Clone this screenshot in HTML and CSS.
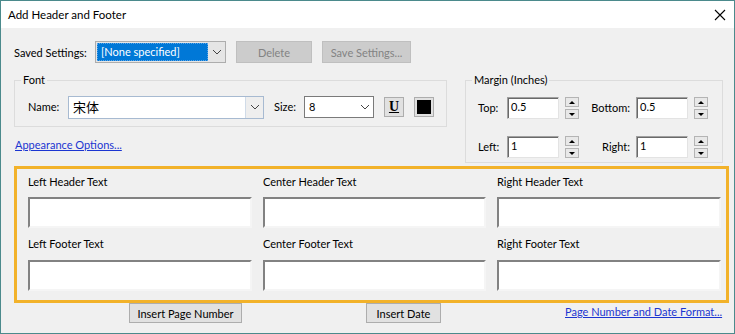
FILE: index.html
```html
<!DOCTYPE html>
<html lang="en">
<head>
  <meta charset="UTF-8" />
  <meta name="viewport" content="width=device-width, initial-scale=1.0"/>
  <title>Add Header and Footer</title>
  <link rel="stylesheet" href="styles.css">
</head>
<body>
  <div class="window">
    <div class="titlebar">
      <span class="title">Add Header and Footer</span>
      <svg class="close" width="12" height="12" viewBox="0 0 12 12">
        <path d="M1 1 L11 11 M11 1 L1 11" stroke="#000" stroke-width="1.1" fill="none"/>
      </svg>
    </div>

    <div class="content">
      <div class="saved-row">
        <span class="saved-label">Saved Settings:</span>
        <div class="list-combo">
          <span class="selected">[None specified]</span>
          <svg class="chev" width="10" height="6" viewBox="0 0 10 6"><path d="M1 1 L5 5 L9 1" stroke="#444" fill="none"/></svg>
        </div>
        <button class="btn disabled delete-btn">Delete</button>
        <button class="btn disabled save-btn">Save Settings...</button>
      </div>

      <div class="groups">
        <div class="left-col">
          <fieldset class="group font-group">
            <legend>Font</legend>
            <div class="font-row">
              <span class="lbl name-lbl">Name:</span>
              <div class="combo name-combo">
                <span class="combo-text cjk">宋体</span>
                <span class="combo-btn">
                  <svg width="10" height="6" viewBox="0 0 10 6"><path d="M1 1 L5 5 L9 1" stroke="#444" fill="none"/></svg>
                </span>
              </div>
              <span class="lbl size-lbl">Size:</span>
              <div class="combo size-combo">
                <span class="combo-text">8</span>
                <span class="combo-btn plain">
                  <svg width="10" height="6" viewBox="0 0 10 6"><path d="M1 1 L5 5 L9 1" stroke="#444" fill="none"/></svg>
                </span>
              </div>
              <button class="tool-btn underline-btn">U</button>
              <button class="tool-btn color-btn"><span class="swatch"></span></button>
            </div>
          </fieldset>
          <a class="link appearance" href="#">Appearance Options...</a>
        </div>

        <fieldset class="group margin-group">
          <legend>Margin (Inches)</legend>
          <div class="margin-grid">
            <span class="lbl">Top:</span>
            <div class="num-input">0.5</div>
            <div class="spinner"><span class="up"></span><span class="down"></span></div>
            <span class="lbl right">Bottom:</span>
            <div class="num-input">0.5</div>
            <div class="spinner"><span class="up"></span><span class="down"></span></div>

            <span class="lbl">Left:</span>
            <div class="num-input">1</div>
            <div class="spinner"><span class="up"></span><span class="down"></span></div>
            <span class="lbl right">Right:</span>
            <div class="num-input">1</div>
            <div class="spinner"><span class="up"></span><span class="down"></span></div>
          </div>
        </fieldset>
      </div>

      <div class="text-box">
        <span class="field-lbl">Left Header Text</span>
        <span class="field-lbl">Center Header Text</span>
        <span class="field-lbl">Right Header Text</span>
        <div class="text-field"></div>
        <div class="text-field"></div>
        <div class="text-field"></div>
        <span class="field-lbl footer">Left Footer Text</span>
        <span class="field-lbl footer">Center Footer Text</span>
        <span class="field-lbl footer">Right Footer Text</span>
        <div class="text-field"></div>
        <div class="text-field"></div>
        <div class="text-field"></div>
      </div>

      <div class="bottom-row">
        <button class="btn page-num-btn">Insert Page Number</button>
        <button class="btn date-btn">Insert Date</button>
        <a class="link format-link" href="#">Page Number and Date Format...</a>
      </div>
    </div>
  </div>
</body>
</html>
```

FILE: styles.css
```css
body {
  margin: 0;
  font-family: Lato, "Noto Sans CJK SC", sans-serif;
  font-size: 11px;
  color: #000;
  background: #f0f0f0;
  white-space: nowrap;
}

.window {
  width: 735px;
  height: 334px;
  box-sizing: border-box;
  border: 1px solid #4b8a8c;
  background: #f0f0f0;
  overflow: hidden;
}

.titlebar {
  height: 27px;
  background: #fff;
  display: flex;
  align-items: center;
  justify-content: space-between;
  padding: 0 8px 0 7px;
}

.title {
  font-size: 11.5px;
  color: #000;
}

.close {
  display: block;
}

.content {
  padding-left: 13px;
}

/* saved settings row */
.saved-row {
  display: flex;
  align-items: center;
  margin-top: 13px;
  height: 22px;
}

.saved-label {
  width: 81px;
}

.list-combo {
  width: 131px;
  height: 22px;
  box-sizing: border-box;
  border: 1px solid #adadad;
  background: #e5e5e5;
  display: flex;
  align-items: center;
  padding: 1px;
}

.selected {
  width: 111px;
  height: 18px;
  line-height: 16px;
  background: #0078d7;
  color: #fff;
  padding-left: 3px;
  box-sizing: border-box;
  border: 1px dotted #5aa4e8;
}

.chev {
  margin-left: 4px;
}

.btn {
  font-family: inherit;
  font-size: 11px;
  height: 20px;
  box-sizing: border-box;
  background: #e1e1e1;
  border: 1px solid #adadad;
  color: #000;
  padding: 0;
  line-height: 17px;
  white-space: nowrap;
}

.btn.disabled {
  background: #cccccc;
  border-color: #bfbfbf;
  color: #838383;
  height: 22px;
}

.delete-btn {
  margin-left: 10px;
  width: 76px;
}

.save-btn {
  margin-left: 10px;
  width: 89px;
}

/* group boxes */
.groups {
  display: flex;
  align-items: flex-start;
  margin-top: 9px;
}

.group {
  margin: 0;
  border: 1px solid #dcdcdc;
  padding: 0 6px;
  box-sizing: border-box;
}

.group legend {
  padding: 0 2px;
  line-height: 16px;
}

.left-col {
  display: flex;
  flex-direction: column;
  align-items: flex-start;
}

.font-group {
  width: 433px;
  height: 55px;
  padding-top: 8px;
}

.font-row {
  display: flex;
  align-items: center;
  margin-left: 7px;
  height: 22px;
}

.lbl {
  line-height: 16px;
}

.name-lbl {
  width: 40px;
}

.combo {
  height: 23px;
  box-sizing: border-box;
  border: 1px solid #7a7a7a;
  background: #fff;
  display: flex;
  align-items: stretch;
}

.combo-text {
  flex: 1;
  padding-left: 4px;
  line-height: 20px;
}

.cjk {
  font-family: "Noto Sans CJK SC", sans-serif;
  font-size: 13px;
}

.combo-btn {
  width: 17px;
  display: flex;
  align-items: center;
  justify-content: center;
  background: #eeeeee;
  border-left: 1px solid #d0dbe8;
}

.combo-btn.plain {
  background: #fff;
  border-left: none;
}

.name-combo {
  width: 196px;
  border-color: #a7bad1;
}

.size-lbl {
  margin-left: 10px;
  width: 30px;
}

.size-combo {
  width: 70px;
  height: 22px;
}

.tool-btn {
  width: 20px;
  height: 20px;
  box-sizing: border-box;
  border: 1px solid #adadad;
  background: #e1e1e1;
  padding: 0;
  display: flex;
  align-items: center;
  justify-content: center;
}

.underline-btn {
  margin-left: 10px;
  font-family: "Liberation Serif", serif;
  font-weight: bold;
  font-size: 14px;
  text-decoration: underline;
  text-underline-offset: 1px;
  line-height: 14px;
}

.color-btn {
  margin-left: 10px;
}

.swatch {
  width: 14px;
  height: 14px;
  background: #000;
}

.link {
  color: #1b35d1;
  text-decoration: underline;
  line-height: 16px;
}

.appearance {
  margin-top: 10px;
  margin-left: 1px;
}

.margin-group {
  margin-left: 18px;
  width: 258px;
  height: 91px;
  padding-top: 9px;
}

.margin-grid {
  display: grid;
  grid-template-columns: 29px 52px 20px 57px 52px 20px;
  grid-auto-rows: 22px;
  row-gap: 17px;
  margin-left: 6px;
  align-items: center;
}

.num-input {
  height: 22px;
  box-sizing: border-box;
  background: #fff;
  border: 1px solid;
  border-color: #a0a0a0 #e3e3e3 #e3e3e3 #a0a0a0;
  box-shadow: inset 1px 1px 0 #696969;
  padding-left: 3px;
  line-height: 18px;
}

.spinner {
  width: 14px;
  height: 22px;
  margin-left: 6px;
  display: flex;
  flex-direction: column;
  justify-content: space-between;
}

.spinner span {
  height: 10px;
  box-sizing: border-box;
  border: 1px solid #b4b4b4;
  background: #e8e8e8;
  display: flex;
  align-items: center;
  justify-content: center;
}

.spinner .up::after {
  content: "";
  border-left: 3px solid transparent;
  border-right: 3px solid transparent;
  border-bottom: 3px solid #000;
}

.spinner .down::after {
  content: "";
  border-left: 3px solid transparent;
  border-right: 3px solid transparent;
  border-top: 3px solid #000;
}

.lbl.right {
  text-align: right;
  padding-right: 6px;
}

/* header and footer text fields */
.text-box {
  margin-top: 3px;
  width: 715px;
  box-sizing: border-box;
  border: 3px solid #f2b22a;
  padding: 5px 4px 9px 11px;
  display: grid;
  grid-template-columns: 224px 223px 224px;
  column-gap: 11px;
}

.field-lbl {
  line-height: 16px;
  margin-bottom: 7px;
}

.field-lbl.footer {
  margin-top: 8px;
  margin-bottom: 8px;
}

.text-field {
  height: 31px;
  box-sizing: border-box;
  background: #fff;
  border: 2px solid;
  border-color: #828282 #f5f5f5 #f5f5f5 #828282;
}

/* bottom buttons */
.bottom-row {
  display: flex;
  align-items: flex-start;
  height: 21px;
}

.page-num-btn {
  margin-left: 115px;
  width: 113px;
}

.date-btn {
  margin-left: 124px;
  width: 75px;
}

.format-link {
  margin-left: 124px;
  margin-top: 1px;
}
```
